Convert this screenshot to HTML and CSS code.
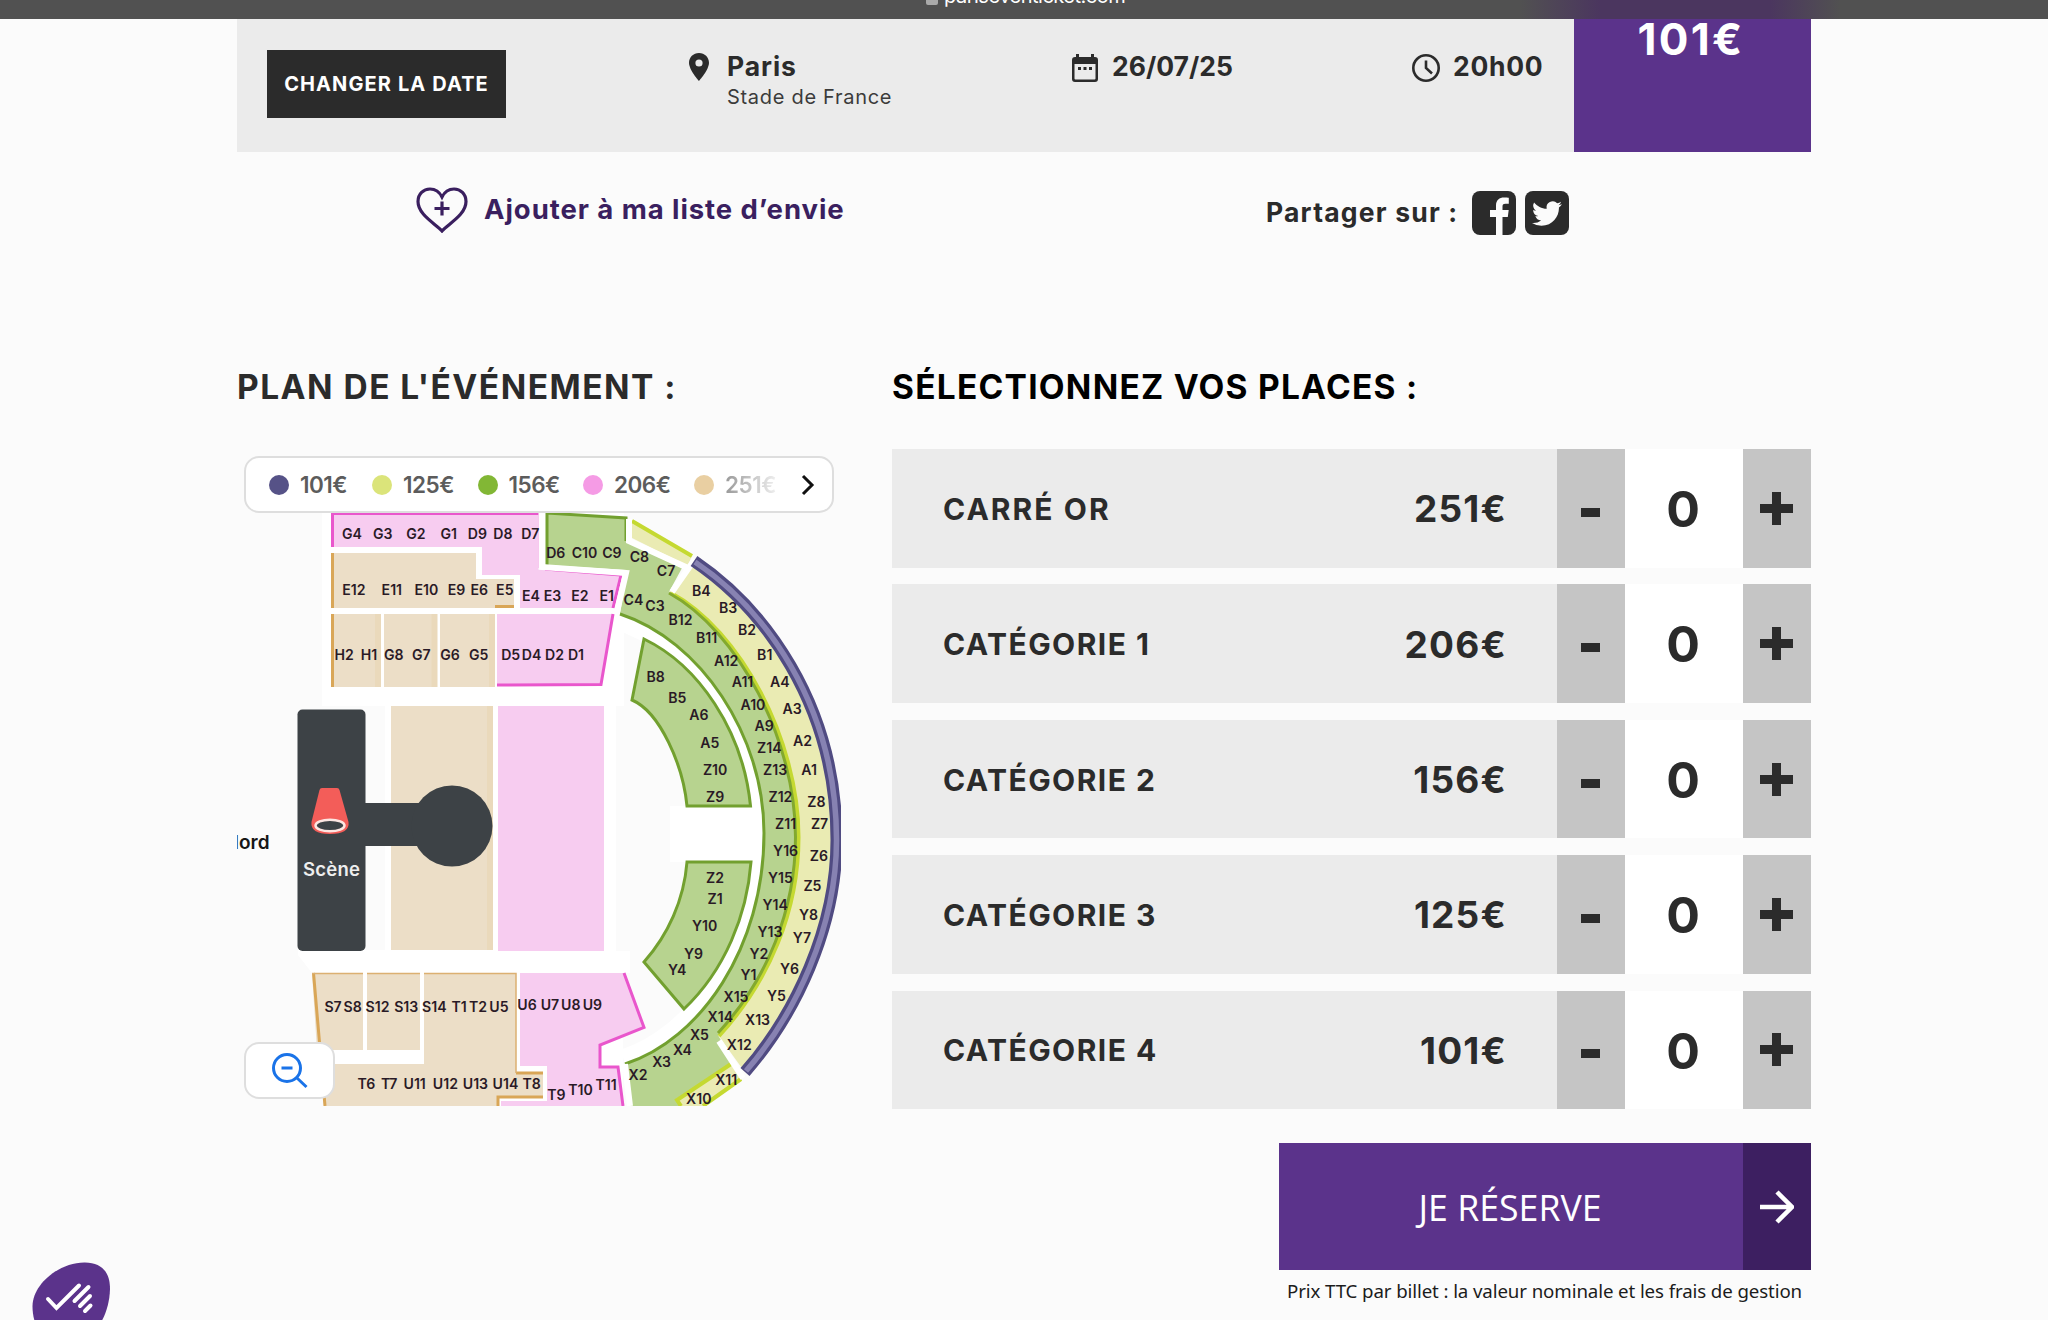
FILE: index.html
```html
<!DOCTYPE html>
<html lang="fr">
<head>
<meta charset="utf-8">
<title>Réservation - Stade de France</title>
<link rel="stylesheet" href="styles.css">
</head>
<body>
<div class="browser-bar"><svg class="lock" viewBox="0 0 12 14"><rect y="5" width="12" height="9" rx="2"/></svg><span class="url">pariseventicket.com</span></div>
<main class="page">
  <header class="event">
    <button class="change">CHANGER LA DATE</button>
    <div class="info place">
      <svg class="pin" viewBox="0 0 20 28"><path fill-rule="evenodd" d="M10 0C4.300 0 0 4.300 0 9.800 0 17 10 28 10 28s10-11 10-18.200C20 4.300 15.700 0 10 0zm0 6.400a3.600 3.600 0 1 1 0 7.200 3.600 3.600 0 0 1 0-7.200z"/></svg>
      <div><div class="strong paris">Paris</div><div class="venue">Stade de France</div></div>
    </div>
    <div class="info date">
      <svg class="cal" viewBox="0 0 26 28"><path fill-rule="evenodd" d="M4 0h3v3h12V0h3v3h1a3 3 0 0 1 3 3v19a3 3 0 0 1-3 3H3a3 3 0 0 1-3-3V6a3 3 0 0 1 3-3h1zM2.500 10v14.500a1 1 0 0 0 1 1h19a1 1 0 0 0 1-1V10z"/><path d="M6 13h3v3H6zM11.500 13h3v3h-3zM17 13h3v3h-3z"/></svg>
      <span class="strong day">26/07/25</span>
    </div>
    <div class="info time">
      <svg class="clock" viewBox="0 0 28 28"><circle cx="14" cy="14" r="12.700"/><path d="M14 6.500V14l6 5.500"/></svg>
      <span class="strong hour">20h00</span>
    </div>
    <div class="from"><span>101€</span></div>
  </header>

  <div class="actions">
    <a class="wish"><svg class="heart" viewBox="0 0 52 46"><path d="M26 44C20 37 2 28 2 14.500 2 7 7.500 2 14 2c5.500 0 9.500 3 12 8 2.500-5 6.500-8 12-8 6.500 0 12 5 12 12.500C50 28 32 37 26 44zM26 14.500v14M18.500 21.500h15"/></svg><span>Ajouter à ma liste d’envie</span></a>
    <div class="share"><span>Partager sur :</span>
      <svg class="social" viewBox="0 0 44 44"><rect width="44" height="44" rx="8"/><path class="mark" d="M24 44V26h-6v-7h6v-4.500C24 9 27.500 6.500 32 6.500c2 0 4 .2 4.800.3v6h-3.300c-2.600 0-3 1.200-3 3V19h6.200l-.9 7h-5.300v18z"/></svg>
      <svg class="social" viewBox="0 0 44 44"><rect width="44" height="44" rx="8"/><path class="mark" transform="translate(7 7.500) scale(1.250)" d="M23.950 4.570a10 10 0 0 1-2.820.77 4.960 4.960 0 0 0 2.160-2.720c-.95.550-2 .95-3.130 1.180a4.920 4.920 0 0 0-8.380 4.480C7.690 8.090 4.070 6.130 1.640 3.160a4.920 4.920 0 0 0 1.520 6.570 4.900 4.900 0 0 1-2.230-.61v.06a4.920 4.920 0 0 0 3.950 4.830 5 5 0 0 1-2.210.080 4.940 4.940 0 0 0 4.600 3.420A9.870 9.870 0 0 1 0 19.540a14 14 0 0 0 7.550 2.210c9.050 0 14-7.500 14-13.980l-.02-.63a10 10 0 0 0 2.420-2.570z"/></svg>
    </div>
  </div>

  <div class="columns">
    <section class="plan">
      <h2 class="plan-title">PLAN DE L'ÉVÉNEMENT :</h2>
      <div class="map">
        <svg class="stadium" viewBox="237 449 604 657">
          <path class="white" d="M322 512H624V706H616V951H630V973H312L298 955V950H385V706H322zM670 806H762V862H670zM331 973H623V1106H331z"/>
          <path class="moat" d="M616 614C700 640 764 735 764 833C764 948 700 1040 625 1064"/>
          <g class="pink">
            <path d="M331 512H540V568L621 575L613 608H520V575H482V547H331z"/>
            <path d="M497 614H613L601 686H497z"/><path d="M498 706H604V951H498z"/>
            <path d="M520 973H624L645 1028L600 1045V1067H618L623 1106H501V1101H547V1066H520z"/>
          </g>
          <path class="pink-line" d="M332.500 547V513.500H540V568M497 685L601 684.500L613 614M613 608L621 575L545 569M624 973L644 1027.500L600 1045V1067H618L623 1106"/>
          <g class="beige">
            <path d="M331 553H476V579H514V608H331z"/><path d="M331 614H381V687H331zM384 614H437V687H384zM440 614H494V687H440z"/>
            <path d="M391 706H493V950H391z"/><path d="M312 973H363V1050H317zM367 973H420V1050H367z"/>
            <path d="M424 973H516V1073H543V1097H498V1106H324L319 1064H424z"/>
          </g>
          <path class="beige-shade" d="M490 706V950M492 614V687M434.500 614V687M378 614V687"/>
          <path class="beige-line" d="M332.500 553V608M332.500 614V687M495 606.500H514M313.500 973L325 1106M498 1106V1097H543M516 1073H543"/>
          <path class="beige-thin" d="M312 973.500H363M367 973.500H420M424 973.500H516V1073"/>
          <g class="green">
            <path d="M546 512L626 518V541L682 568L669 592C740 630 797 740 797 837C797 910 769 980 718 1035L733 1062L676 1099L680 1107H629L625 1064C700 1040 764 948 764 833C764 735 700 640 620 614L627 570L546 565z"/>
            <path d="M644 639C698 665 743 730 750.500 806H687C683 765 660 712 632 700z"/>
            <path d="M687 862H751C747 915 725 970 684 1009L644 962C668 935 684 900 687 862z"/>
          </g>
          <path class="green-line" d="M547 565V513L626 518V541M620 614C700 640 764 735 764 833C764 948 700 1040 625 1064M644 639C698 665 743 730 750.500 806H687C683 765 660 712 632 700zM687 862H751C747 915 725 970 684 1009L644 962C668 935 684 900 687 862z"/>
          <path class="yellow" d="M632 520L692 555L688 566L632 538zM693 562L669 592C740 630 797 740 797 837C797 910 769 980 718 1035L744 1071C795 1015 837 928 837 840C837 702 762 607 693 562zM731 1063L741 1079L703 1107H681L676 1100z"/>
          <path class="yellow-line" d="M632 521L692 556M671 593C740 630 798.500 740 798.500 837C798.500 910 770 980 719 1036M741 1079L703 1106M731 1064L677 1100L681 1106"/>
          <path class="green-edge" d="M669 593C738 631 795.500 740 795.500 837C795.500 910 767 980 718 1033"/>
          <path class="gap" d="M629 519V541L688 568M695 559L672 592M719 1041L743 1078M541.500 512V567L626 573L617 612M625 1064L630 1106"/>
          <path class="violet" d="M694 561C762 607 836.500 702 836.500 840C836.500 928 795 1015 745 1072"/>
          <path class="violet-in" d="M695 562C762 607 836.500 702 836.500 840C836.500 928 795 1015 746 1071"/>
          <rect class="stage" x="297.500" y="709.500" width="68" height="241.500" rx="5"/><path class="stage" d="M364 803H430V846H364z"/><circle class="stage" cx="452" cy="826" r="40.500"/>
          <path class="lamp" d="M322 788H337Q339 788 339.500 790L348.500 822Q350 834 330 834Q310 834 311.500 822L319.500 790Q320 788 322 788z"/><ellipse class="lamp-mouth" cx="330" cy="825.500" rx="14.500" ry="5.800"/>
          <text class="scene" x="331.500" y="875.500" textLength="57">Scène</text>
          <text class="nord" x="269.500" y="848.500">Nord</text>
          <g class="labels" transform="scale(1.306122)">
            <text x="269.500" y="412.500">G4</text><text x="293" y="412.500">G3</text><text x="318.500" y="412.500">G2</text><text x="343.500" y="412.500">G1</text><text x="365.500" y="413">D9</text><text x="385" y="413">D8</text><text x="406" y="413">D7</text>
            <text x="425.500" y="427">D6</text><text x="447.500" y="427">C10</text><text x="468.500" y="427">C9</text><text x="489.500" y="430.500">C8</text><text x="510" y="441">C7</text>
            <text x="271" y="455.500">E12</text><text x="300" y="455.500">E11</text><text x="326.500" y="455.500">E10</text><text x="349.500" y="455.500">E9</text><text x="367" y="455.500">E6</text><text x="386.500" y="455.500">E5</text><text x="406.500" y="460">E4</text><text x="423" y="460">E3</text><text x="444" y="460">E2</text><text x="464.500" y="460">E1</text>
            <text x="485" y="463">C4</text><text x="501.500" y="468">C3</text><text x="521" y="478.500">B12</text><text x="541" y="492">B11</text><text x="556" y="510">A12</text><text x="568.500" y="526">A11</text><text x="576.500" y="543.500">A10</text><text x="585" y="560">A9</text><text x="589" y="576.500">Z14</text><text x="593.500" y="593.500">Z13</text><text x="597.500" y="614">Z12</text><text x="601.500" y="634.500">Z11</text><text x="601.500" y="655.500">Y16</text><text x="597.500" y="676">Y15</text><text x="593.500" y="696.500">Y14</text><text x="589.500" y="717.500">Y13</text><text x="581" y="734">Y2</text><text x="573" y="750.500">Y1</text><text x="563.500" y="767">X15</text><text x="551.500" y="782.500">X14</text><text x="535.500" y="796">X5</text><text x="522.500" y="808">X4</text><text x="506.500" y="817">X3</text><text x="488.500" y="826.500">X2</text>
            <text x="537" y="456.500">B4</text><text x="557.500" y="469">B3</text><text x="572" y="486.500">B2</text><text x="585.500" y="505.500">B1</text><text x="597" y="526">A4</text><text x="606.500" y="547">A3</text><text x="614.500" y="571.500">A2</text><text x="619.500" y="593.500">A1</text><text x="625" y="618">Z8</text><text x="627.500" y="635">Z7</text><text x="627" y="659.500">Z6</text><text x="622" y="682.500">Z5</text><text x="619" y="704">Y8</text><text x="614" y="722">Y7</text><text x="604.500" y="745.500">Y6</text><text x="594.500" y="766.500">Y5</text><text x="580" y="784.500">X13</text><text x="566" y="804">X12</text><text x="556" y="831">X11</text><text x="535" y="845">X10</text>
            <text x="263.500" y="505.500">H2</text><text x="282.500" y="505.500">H1</text><text x="301.500" y="505.500">G8</text><text x="322.500" y="505.500">G7</text><text x="344.500" y="505.500">G6</text><text x="366.500" y="505.500">G5</text><text x="391" y="505.500">D5</text><text x="407" y="505.500">D4</text><text x="424.500" y="505.500">D2</text><text x="441" y="505.500">D1</text>
            <text x="502" y="522.500">B8</text><text x="518.500" y="538.500">B5</text><text x="535" y="551.500">A6</text><text x="543.500" y="572.500">A5</text><text x="547.500" y="593.500">Z10</text><text x="547.500" y="614">Z9</text><text x="547.500" y="676">Z2</text><text x="547.500" y="692">Z1</text><text x="539.500" y="713">Y10</text><text x="531" y="734">Y9</text><text x="518.500" y="746.500">Y4</text>
            <text x="255" y="775">S7</text><text x="270" y="775">S8</text><text x="289" y="775">S12</text><text x="311" y="775">S13</text><text x="332.500" y="774.500">S14</text><text x="351.500" y="775">T1</text><text x="366" y="775">T2</text><text x="382" y="775">U5</text><text x="403.500" y="773.500">U6</text><text x="421" y="773.500">U7</text><text x="437" y="773.500">U8</text><text x="453.500" y="773.500">U9</text>
            <text x="280.500" y="834">T6</text><text x="298" y="834">T7</text><text x="317.500" y="834">U11</text><text x="341" y="834">U12</text><text x="364" y="834">U13</text><text x="387" y="834">U14</text><text x="407" y="834">T8</text><text x="426" y="842.500">T9</text><text x="444.500" y="838">T10</text><text x="464" y="834.500">T11</text>
          </g>
        </svg>
        <div class="legend">
          <span class="tier first"><i class="dot d101"></i>101€</span><span class="tier"><i class="dot d125"></i>125€</span><span class="tier"><i class="dot d156"></i>156€</span><span class="tier"><i class="dot d206"></i>206€</span><span class="tier last"><i class="dot d251"></i><b class="fade">251€</b></span>
          <svg class="chevron" viewBox="0 0 14 22"><path d="M2 2l9 9-9 9"/></svg>
        </div>
        <button class="zoom-out"><svg viewBox="0 0 36 36"><circle cx="15" cy="15" r="13.500"/><path d="M9.500 15h11M25 25l9.500 9"/></svg></button>
      </div>
    </section>

    <section class="seats">
      <h2 class="seats-title">SÉLECTIONNEZ VOS PLACES :</h2>
      <div class="rows">
        <div class="row"><span class="name gold">CARRÉ OR</span><span class="price">251€</span><button class="step minus"><i></i></button><span class="qty">0</span><button class="step plus"><i></i></button></div>
        <div class="row"><span class="name">CATÉGORIE 1</span><span class="price">206€</span><button class="step minus"><i></i></button><span class="qty">0</span><button class="step plus"><i></i></button></div>
        <div class="row"><span class="name">CATÉGORIE 2</span><span class="price">156€</span><button class="step minus"><i></i></button><span class="qty">0</span><button class="step plus"><i></i></button></div>
        <div class="row"><span class="name">CATÉGORIE 3</span><span class="price">125€</span><button class="step minus"><i></i></button><span class="qty">0</span><button class="step plus"><i></i></button></div>
        <div class="row"><span class="name">CATÉGORIE 4</span><span class="price">101€</span><button class="step minus"><i></i></button><span class="qty">0</span><button class="step plus"><i></i></button></div>
      </div>
      <button class="book"><span class="book-text">JE RÉSERVE</span><span class="book-arrow"><svg viewBox="0 0 34 34"><path d="M0 17h31M17 2l15 15-15 15"/></svg></span></button>
      <p class="note">Prix TTC par billet : la valeur nominale et les frais de gestion</p>
    </section>
  </div>
</main>
<svg class="consent" viewBox="0 0 80 60"><path class="blob" d="M0.500 45C0 22 28 0 53 0.500C70 1 78 10 78 27C77 62 54 84 35 84C14 84 1 68 0.500 45z"/><path class="tick" d="M16 37L24.500 46L47 23.500M42.500 39L56.500 25M48 44L58 34M53 49L58.500 43.500"/></svg>
</body>
</html>
```
FILE: styles.css
```css
* { box-sizing: border-box; }
body { margin: 0; width: 2048px; height: 1320px; overflow: hidden; position: relative; background: #fbfbfb; color: #2b2b2b; font-family: Inter, "Liberation Sans", sans-serif; }
button { border: 0; padding: 0; font-family: inherit; color: inherit; }
h2, p { margin: 0; }
svg { display: block; flex: none; }
.browser-bar { height: 19px; overflow: hidden; display: flex; padding-left: 926px; background: linear-gradient(90deg, #515151 1520px, #4b365f 1600px, #4b365f 1770px, #515151 1840px); }
.lock { width: 12px; height: 14px; margin: -9px 6px 0 0; fill: #aaa; }
.url { margin-top: -17px; font-size: 20px; line-height: 26px; letter-spacing: -0.500px; color: #fff; white-space: nowrap; }
.page { width: 1574px; margin-left: 237px; }
.event { height: 133px; display: flex; align-items: flex-start; background: #ebebeb; }
.change { width: 239px; height: 68px; margin: 31px 0 0 30px; background: #2b2b2b; color: #fff; font-weight: 700; font-size: 20px; white-space: nowrap; letter-spacing: 1.100px; }
.info { display: flex; padding-top: 34px; }
.place { margin-left: 183px; width: 383px; }
.pin { width: 20px; height: 28px; margin-right: 18px; fill: #2b2b2b; }
.strong { font-weight: 700; font-size: 26.500px; line-height: 28px; white-space: nowrap; }
.paris { margin-top: -1px; letter-spacing: 0.900px; }
.venue { font-size: 20px; line-height: 24px; margin-top: 5px; letter-spacing: 0.700px; color: #3b3b3b; }
.date { width: 340px; }
.cal { width: 26px; height: 28px; margin: 1px 14px 0 0; fill: #2b2b2b; }
.day, .hour { margin-top: -1px; }
.hour { letter-spacing: 0.700px; }
.clock { width: 28px; height: 28px; margin: 1px 13px 0 0; fill: none; stroke: #2b2b2b; stroke-width: 2.600; }
.from { margin-left: auto; width: 237px; height: 133px; background: #5b338b; color: #fff; font-size: 44px; font-weight: 700; line-height: 52px; letter-spacing: 2.300px; text-align: center; }
.from span { display: block; margin: -6px 3px 0 0; }
.actions { height: 216px; display: flex; padding-top: 35px; font-weight: 700; }
.wish { display: flex; margin-left: 179px; width: 850px; color: #3a1f5f; font-size: 27.500px; line-height: 34px; letter-spacing: 0.930px; white-space: nowrap; }
.wish span { margin: 5px 0 0 16px; }
.heart { width: 52px; height: 46px; fill: none; stroke: #3a1f5f; stroke-width: 3.200; }
.share { display: flex; padding-top: 4px; font-size: 26.500px; line-height: 42px; letter-spacing: 1.200px; white-space: nowrap; }
.share span { width: 206px; }
.social { width: 44px; height: 44px; margin-right: 9px; fill: #2b2b2b; }
.social .mark { fill: #fbfbfb; }
.columns { display: flex; }
.plan { width: 655px; }
.seats { width: 919px; }
h2 { font-size: 33.500px; line-height: 38px; height: 81px; font-weight: 700; white-space: nowrap; }
.plan-title { letter-spacing: 1.470px; }
.seats-title { color: #000; letter-spacing: 1.240px; }
.map { position: relative; width: 604px; height: 657px; }
.stadium { width: 604px; height: 657px; overflow: hidden; }
.white { fill: #fff; }
.moat { fill: none; stroke: #fff; stroke-width: 30; }
.pink { fill: #f7ccf0; }
.pink-line { fill: none; stroke: #e956cc; stroke-width: 3; }
.beige { fill: #ecdec7; }
.beige-line { fill: none; stroke: #d9a657; stroke-width: 3; }
.beige-thin { fill: none; stroke: #dcb071; stroke-width: 1.500; }
.beige-shade { fill: none; stroke: #ead9bb; stroke-width: 6; }
.green { fill: #b7d38f; }
.green-line { fill: none; stroke: #72a02f; stroke-width: 3; }
.green-edge { fill: none; stroke: #83a92e; stroke-width: 3; }
.yellow { fill: #eaebb3; }
.yellow-line { fill: none; stroke: #c5d931; stroke-width: 4; }
.gap { fill: none; stroke: #fff; stroke-width: 6; }
.violet { fill: none; stroke: #504b82; stroke-width: 12; }
.violet-in { fill: none; stroke: #8782b2; stroke-width: 5.500; }
.stage { fill: #3d4246; }
.lamp { fill: #f35d59; }
.lamp-mouth { fill: #3d4246; stroke: #fde6e2; stroke-width: 2.500; }
.stadium text { text-anchor: middle; font-weight: 600; }
.stadium .scene { font-size: 18.500px; fill: #eee; }
.stadium .nord { font-size: 19px; fill: #161616; text-anchor: end; }
.labels { font-size: 10.800px; fill: #2a1a26; }
.legend { position: absolute; left: 7px; top: 7px; width: 590px; height: 57px; display: flex; align-items: center; padding-left: 23px; border: 2px solid #dedede; border-radius: 15px; background: #fff; color: #5c5c5c; font-size: 22.500px; font-weight: 600; }
.tier { display: flex; flex: none; align-items: center; width: 105.500px; white-space: nowrap; letter-spacing: -0.500px; }
.tier.first { width: 103px; }
.tier.last { width: 107px; margin-left: 5.500px; }
.dot { flex: none; width: 20px; height: 20px; border-radius: 50%; margin-right: 11px; }
.d101 { background: #565287; }
.d125 { background: #dbe47a; }
.d156 { background: #82b735; }
.d206 { background: #f59be5; }
.d251 { background: #e9cfa2; }
.fade { font-weight: 600; background: linear-gradient(90deg, #999, #eee); background-clip: text; color: transparent; }
.chevron { width: 14px; height: 22px; fill: none; stroke: #111; stroke-width: 3; }
.zoom-out { position: absolute; left: 7px; top: 593px; width: 91px; height: 57px; padding-left: 26px; background: #fff; border: 2px solid #dedede; border-radius: 15px; }
.zoom-out svg { width: 36px; height: 36px; fill: none; stroke: #1a73e8; stroke-width: 3; }
.rows { display: flex; flex-direction: column; gap: 16.900px; }
.row { height: 118.500px; display: flex; align-items: center; background: #ebebeb; font-weight: 700; }
.name { padding-left: 51px; width: 400px; font-size: 30px; line-height: 38px; padding-top: 1px; letter-spacing: 1.450px; white-space: nowrap; }
.gold { letter-spacing: 2.050px; }
.price { width: 215px; padding-top: 1px; text-align: right; font-size: 37px; letter-spacing: 1.200px; white-space: nowrap; }
.step { width: 68px; height: 100%; background: #c5c5c5; display: grid; place-items: center; }
.minus { margin-left: 50px; }
.minus i { width: 19px; height: 9px; background: #2b2b2b; margin: 8px 2px 0 0; }
.plus i { width: 33px; height: 33px; margin-right: 1px; background: linear-gradient(#2b2b2b, #2b2b2b) center / 100% 9px no-repeat, linear-gradient(#2b2b2b, #2b2b2b) center / 9px 100% no-repeat; }
.qty { width: 118px; height: 100%; padding-right: 2px; line-height: 120px; background: #fff; text-align: center; font-size: 50px; }
.book { display: flex; width: 532px; height: 127px; margin: 34px 0 0 387px; background: #5b338b; color: #fff; }
.book-text { width: 464px; padding-right: 2px; font: 400 35.700px/128px "Open Sans", "Noto Sans", sans-serif; white-space: nowrap; }
.book-arrow { width: 68px; height: 127px; display: grid; place-items: center; background: #3d1f61; }
.book-arrow svg { width: 34px; height: 34px; fill: none; stroke: #fff; stroke-width: 4.500; }
.note { margin: 8px 0 0 395px; font: 400 18.700px/26px "Noto Sans", sans-serif; letter-spacing: -0.110px; color: #1c1c1c; white-space: nowrap; }
.consent { position: absolute; left: 32px; top: 1262px; width: 80px; height: 60px; overflow: hidden; }
.blob { fill: #5b338b; }
.tick { fill: none; stroke: #fff; stroke-width: 4; stroke-linecap: round; }
```
